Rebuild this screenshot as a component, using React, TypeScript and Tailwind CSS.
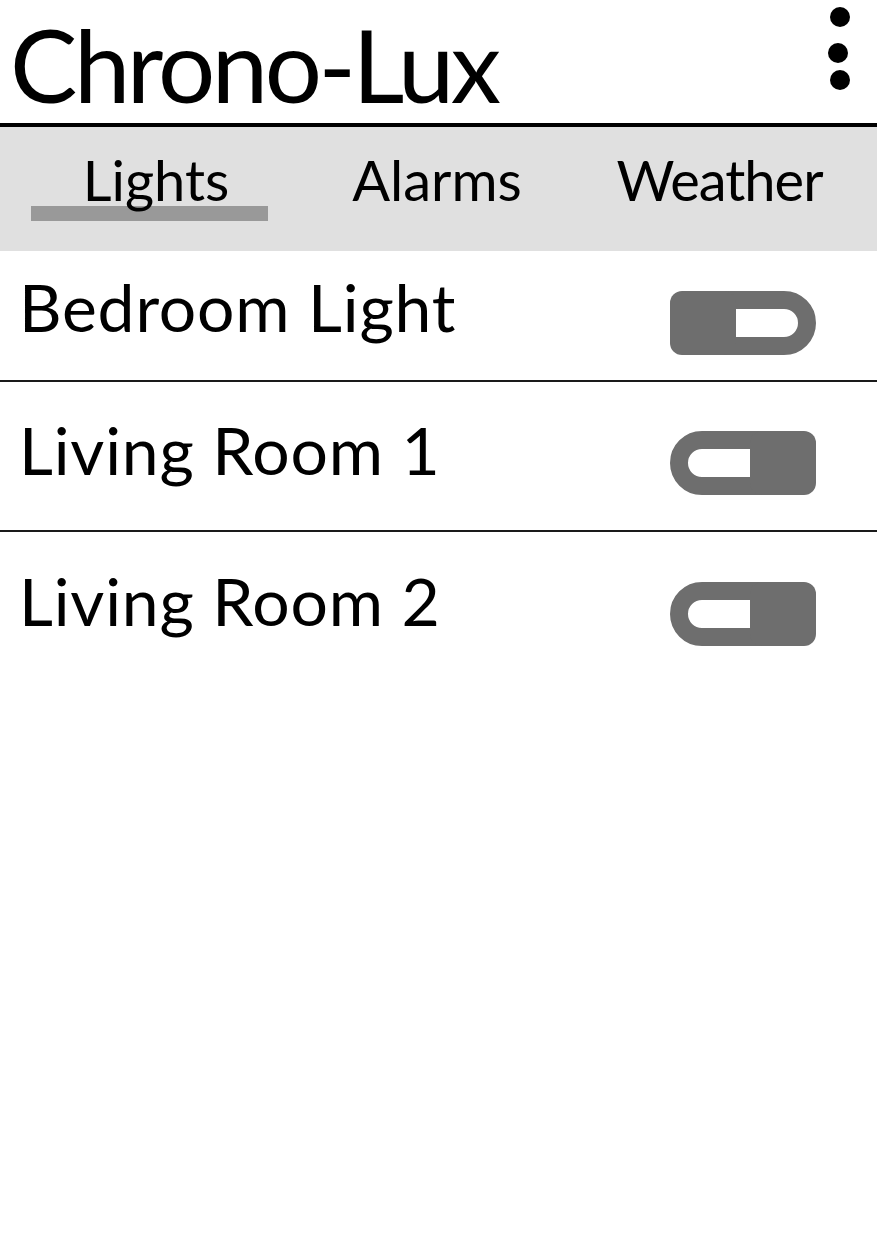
import React from "react";

function Toggle({ on }: { on: boolean }) {
  return (
    <svg width="146" height="64" viewBox="0 0 146 64" className="shrink-0 mt-[14px]">
      <rect x="9" y="9" width="128" height="46" rx="23" fill="none" stroke="#6e6e6e" strokeWidth="18" />
      <rect x={on ? 80 : 0} y="0" width="66" height="64" rx="12" fill="#6e6e6e" />
    </svg>
  );
}

const rows = [
  { name: "Bedroom Light", on: false, h: "h-[131px] border-b-2", mb: "mb-[18px]" },
  { name: "Living Room 1", on: true, h: "h-[150px] border-b-2", mb: "mb-[12px]" },
  { name: "Living Room 2", on: true, h: "h-[150px]", mb: "mb-[12px]" },
];

export default function App() {
  return (
    <div className="w-[877px] h-[1240px] bg-white text-black font-['Lato',sans-serif]">
      {/* header */}
      <div className="h-[127px] flex items-start justify-between border-b-4 border-black">
        <h1 className="pl-[10px] pt-[14px] text-[101px] leading-none tracking-[-3.5px]">Chrono-Lux</h1>
        <div className="flex flex-col items-center pt-[7px] pr-[27px]">
          <div className="h-5 w-5 rounded-full bg-black" />
          <div className="h-5 w-5 rounded-full bg-black mt-[16px] -ml-[4px]" />
          <div className="h-5 w-5 rounded-full bg-black mt-[7px]" />
        </div>
      </div>

      {/* tabs */}
      <div className="h-[124px] bg-[#e0e0e0] grid grid-cols-[312px_250px_1fr] text-[56px] leading-none">
        <div className="flex flex-col pt-[25px]">
          <span className="relative z-10 self-center">Lights</span>
          <div className="h-[15px] w-[237px] ml-[31px] -mt-[2px] bg-[#999999]" />
        </div>
        <div className="flex justify-center pt-[25px]">Alarms</div>
        <div className="flex justify-center pt-[25px] tracking-[-1px]">Weather</div>
      </div>

      {/* rows */}
      {rows.map((r) => (
        <div
          key={r.name}
          className={`${r.h} flex items-center justify-between pl-[19px] pr-[61px] border-[#1a1a1a]`}
        >
          <span className={`text-[66px] leading-none tracking-[0.8px] ${r.mb}`}>{r.name}</span>
          <Toggle on={r.on} />
        </div>
      ))}
    </div>
  );
}
